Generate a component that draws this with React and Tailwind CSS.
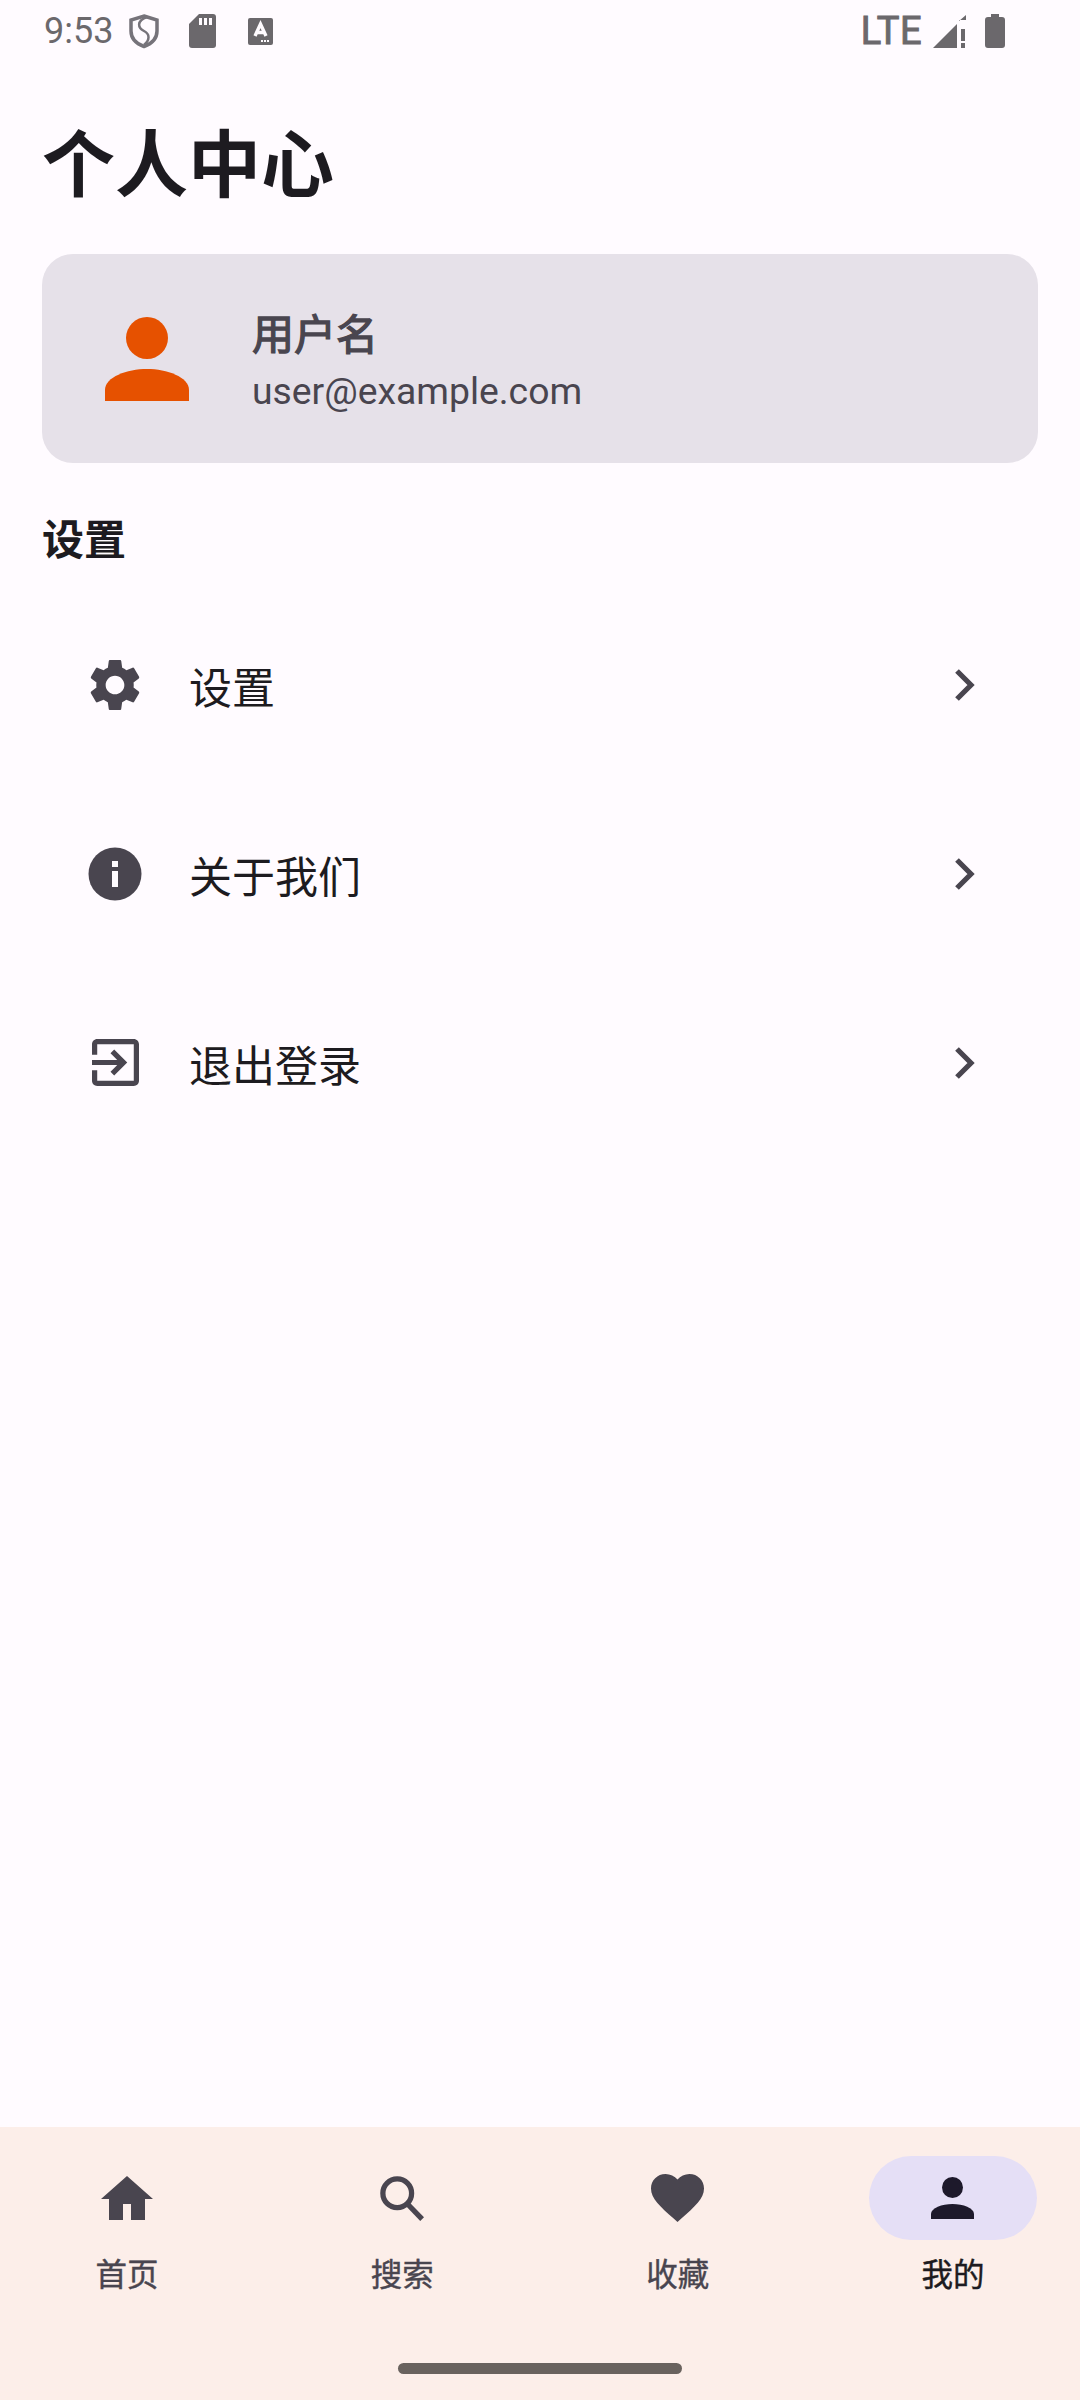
const F = { fontFamily: '"Roboto","Noto Sans CJK SC",sans-serif' };

function Chevron() {
  return (
    <svg width="22" height="34" viewBox="0 0 22 34" className="shrink-0">
      <path d="M3 3 L17 17 L3 31" fill="none" stroke="#49454f" strokeWidth="5.2" />
    </svg>
  );
}

function Gear() {
  return (
    <svg width="52" height="52" viewBox="2 2 20 20" fill="#49454f">
      <path d="M19.14 12.94c.04-.3.06-.61.06-.94 0-.32-.02-.64-.07-.94l2.03-1.58c.18-.14.23-.41.12-.61l-1.92-3.32c-.12-.22-.37-.29-.59-.22l-2.39.96c-.5-.38-1.03-.7-1.62-.94l-.36-2.54c-.04-.24-.24-.41-.48-.41h-3.84c-.24 0-.43.17-.47.41l-.36 2.54c-.59.24-1.13.57-1.62.94l-2.39-.96c-.22-.08-.47 0-.59.22L2.74 8.87c-.12.21-.08.47.12.61l2.03 1.58c-.05.3-.09.63-.09.94s.02.64.07.94l-2.03 1.58c-.18.14-.23.41-.12.61l1.92 3.32c.12.22.37.29.59.22l2.39-.96c.5.38 1.03.7 1.62.94l.36 2.54c.05.24.24.41.48.41h3.84c.24 0 .44-.17.47-.41l.36-2.54c.59-.24 1.13-.56 1.62-.94l2.39.96c.22.08.47 0 .59-.22l1.92-3.32c.12-.22.07-.47-.12-.61l-2.01-1.58zM12 15.6c-1.98 0-3.6-1.62-3.6-3.6s1.62-3.6 3.6-3.6 3.6 1.62 3.6 3.6-1.62 3.6-3.6 3.6z" />
    </svg>
  );
}

function Info() {
  return (
    <svg width="54" height="54" viewBox="0 0 54 54">
      <circle cx="27" cy="27" r="26.5" fill="#49454f" />
      <rect x="24" y="14" width="6" height="6" fill="#fffbff" />
      <rect x="24" y="24" width="6" height="16" fill="#fffbff" />
    </svg>
  );
}

function Exit() {
  return (
    <svg width="47" height="47" viewBox="3 3 18 18" fill="#49454f">
      <path d="M10.09 15.59 11.5 17l5-5-5-5-1.41 1.41L12.67 11H3v2h9.67l-2.58 2.59zM19 3H5c-1.11 0-2 .9-2 2v4h2V5h14v14H5v-4H3v4c0 1.1.89 2 2 2h14c1.1 0 2-.9 2-2V5c0-1.1-.9-2-2-2z" />
    </svg>
  );
}

function Home() {
  return (
    <svg width="52" height="44" viewBox="0 0 52 44" fill="#49454f">
      <path d="M26 0 L52 23 H44 V44 H30 V28 H22 V44 H8 V23 H0 Z" />
    </svg>
  );
}

function Search() {
  return (
    <svg width="45" height="45" viewBox="0 0 47 47" fill="none" stroke="#49454f">
      <circle cx="18" cy="18" r="15" strokeWidth="5.5" />
      <path d="M28.5 29 L44 45" strokeWidth="5.5" />
    </svg>
  );
}

function Heart() {
  return (
    <svg width="53" height="48" viewBox="2 3 20 18.35" fill="#49454f" preserveAspectRatio="none">
      <path d="m12 21.35-1.45-1.32C5.4 15.36 2 12.28 2 8.5 2 5.42 4.42 3 7.5 3c1.74 0 3.41.81 4.5 2.09C13.09 3.81 14.76 3 16.5 3 19.58 3 22 5.42 22 8.5c0 3.78-3.4 6.86-8.55 11.54L12 21.35z" />
    </svg>
  );
}

function Person() {
  return (
    <svg width="43" height="42" viewBox="0 0 43 42" fill="#1d192b">
      <circle cx="21.5" cy="10.5" r="10.5" />
      <path d="M0 42 V37 C0 31 11 27 21.5 27 S43 31 43 37 V42 Z" />
    </svg>
  );
}

function Avatar() {
  return (
    <svg width="84" height="84" viewBox="0 0 84 84" fill="#e65100">
      <circle cx="42" cy="21" r="21" />
      <path d="M0 84 V73 C0 60 22 52 42 52 S84 60 84 73 V84 Z" />
    </svg>
  );
}

function Row({ icon, label }) {
  return (
    <div className="flex items-center h-[189px] pl-[46px] pr-[62px]">
      <div className="w-[54px] h-[54px] shrink-0 flex items-center justify-center">{icon}</div>
      <div className="flex-1 ml-[47px] text-[43px] leading-[56px] text-[#1d1b20] mt-[9px]">{label}</div>
      <Chevron />
    </div>
  );
}

function NavItem({ icon, label, active }) {
  return (
    <div className="w-[168px] flex flex-col items-center">
      <div className={`w-[168px] h-[84px] rounded-full flex items-center justify-center ${active ? "bg-[#e5dff6]" : ""}`}>{icon}</div>
      <div className={`mt-[15px] text-[31.5px] leading-[42px] [-webkit-text-stroke:0.4px] ${active ? "text-[#1d1b20]" : "text-[#49454f]"}`}>{label}</div>
    </div>
  );
}

export default function App() {
  return (
    <div style={F} className="w-[1080px] h-[2400px] bg-[#fffbff] flex flex-col overflow-hidden">
      <div className="h-[62px] shrink-0 flex items-center justify-between pl-[44px] pr-[75px] text-[#6b686c]">
        <div className="flex items-center">
          <span className="text-[36px] leading-[40px]">9:53</span>
          <svg width="32" height="36" viewBox="0 0 32 36" className="ml-[15px]" fill="none" stroke="#76737a" strokeWidth="3.5">
            <path d="M16 3 L29 7 V18 C29 26 23 31 16 33.5 C9 31 3 26 3 18 V7 Z" />
            <path d="M19 4 C8 8 10 15 16 18 C22 21 22 27 16 32" strokeWidth="2.5" />
          </svg>
          <svg width="27" height="34" viewBox="0 0 27 34" className="ml-[29px]">
            <path d="M10 0 H24 Q27 0 27 3 V31 Q27 34 24 34 H3 Q0 34 0 31 V10 Z" fill="#6b686c" />
            <rect x="10" y="4" width="3" height="7" fill="#fffbff" />
            <rect x="15" y="4" width="3" height="7" fill="#fffbff" />
            <rect x="20" y="4" width="3" height="7" fill="#fffbff" />
          </svg>
          <svg width="25" height="27" viewBox="0 0 25 27" className="ml-[32px]">
            <rect width="25" height="27" rx="2" fill="#6b686c" />
            <path d="M7 18 L12.5 6 L18 18 M9 14.5 H16" fill="none" stroke="#fffbff" strokeWidth="3.4" />
            <rect x="13" y="22" width="2" height="2" fill="#fffbff" />
            <rect x="16" y="22" width="2" height="2" fill="#fffbff" />
            <rect x="19" y="22" width="2" height="2" fill="#fffbff" />
          </svg>
        </div>
        <div className="flex items-center">
          <span className="text-[38px] leading-[40px] tracking-[0.5px] [-webkit-text-stroke:1px]">LTE</span>
          <svg width="33" height="33" viewBox="0 0 33 33" className="ml-[11px]">
            <path d="M0 33 L24 9 V33 Z" fill="#6b686c" />
            <path d="M26 6 L33 0 V5 H26 Z" fill="#6b686c" />
            <rect x="28" y="14" width="4" height="12" fill="#6b686c" />
            <rect x="28" y="28" width="4" height="5" fill="#6b686c" />
          </svg>
          <svg width="20" height="34" viewBox="0 0 20 34" className="ml-[19px]">
            <path d="M6 0 H14 V3 H17 Q20 3 20 6 V31 Q20 34 17 34 H3 Q0 34 0 31 V6 Q0 3 3 3 H6 Z" fill="#6b686c" />
          </svg>
        </div>
      </div>

      <div className="flex-1 flex flex-col px-[42px]">
        <h1 className="mt-[62px] text-[73px] leading-[84px] font-bold text-[#1d1b20]">个人中心</h1>
        <div className="mt-[46px] h-[209px] rounded-[31px] bg-[#e6e1e9] flex items-center pl-[63px]">
          <Avatar />
          <div className="ml-[63px] pt-[7px] flex flex-col">
            <div className="text-[42px] leading-[52px] [-webkit-text-stroke:1.3px] text-[#49454f]">用户名</div>
            <div className="mt-[5px] text-[37.3px] leading-[48px] text-[#49454f]">user@example.com</div>
          </div>
        </div>
        <h2 className="mt-[50px] text-[42px] leading-[56px] font-bold text-[#1d1b20]">设置</h2>
        <div className="mt-[21px]">
          <Row icon={<Gear />} label="设置" />
          <Row icon={<Info />} label="关于我们" />
          <Row icon={<Exit />} label="退出登录" />
        </div>
      </div>

      <div className="h-[273px] shrink-0 bg-[#fceee9] flex flex-col">
        <div className="mt-[29px] flex justify-between px-[43px]">
          <NavItem icon={<Home />} label="首页" />
          <NavItem icon={<Search />} label="搜索" />
          <NavItem icon={<Heart />} label="收藏" />
          <NavItem icon={<Person />} label="我的" active />
        </div>
        <div className="mt-[66px] self-center w-[284px] h-[11px] rounded-full bg-[#69625e]" />
      </div>
    </div>
  );
}
